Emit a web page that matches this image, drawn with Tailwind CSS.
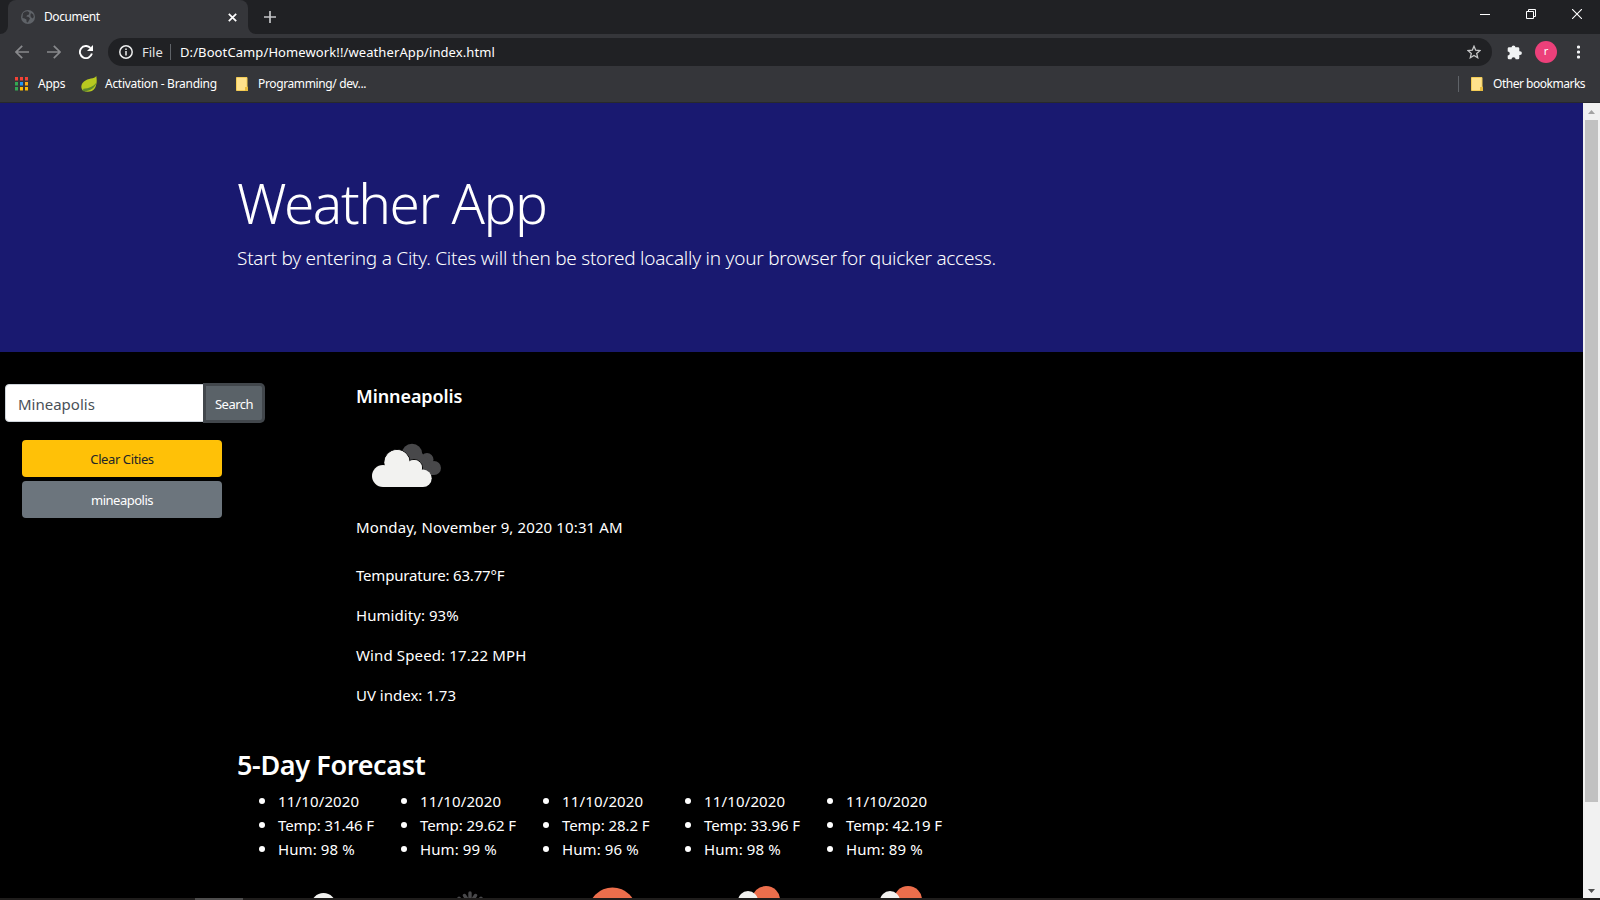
<!DOCTYPE html>
<html lang="en">
<head>
<meta charset="utf-8">
<title>Document</title>
<script src="https://cdn.jsdelivr.net/npm/@tailwindcss/browser@4"></script>
</head>
<body class="w-[1600px] h-[900px] overflow-hidden bg-black text-white font-['Noto_Sans','Open_Sans',sans-serif]">
<div class="w-[1600px] h-[900px] flex flex-col">

  <!-- Tab strip -->
  <div class="h-[34px] shrink-0 bg-[#202124] flex">
    <svg class="w-2 h-[34px] shrink-0" viewBox="0 0 8 34"><path d="M0 34a8 8 0 0 0 8-8v8z" fill="#35363a"/></svg>
    <div class="w-[240px] h-[34px] bg-[#35363a] rounded-t-lg flex items-center pl-[13px] pr-[11px]">
      <svg class="w-[14px] h-[14px] shrink-0" viewBox="0 0 14 14"><circle cx="7" cy="7" r="7" fill="#5f6368"/><path d="M2 3.2Q4 1 6.6 1.2L8.4 2.6 8 4.4 6 5.2 5.4 6.6 7.6 7l1.4 1.6L8 10.2 6.8 12.6 5.6 12 5.4 9.6 3.6 8.4 1.4 8zM10 3l2.2 1.4.6 2.6-1.2 1.4L9.8 7 9.4 5z" fill="#35363a"/></svg>
      <span class="ml-[9px] text-[12px] leading-4 tracking-[-0.42px]">Document</span>
      <svg class="ml-auto w-[9px] h-[9px]" viewBox="0 0 9 9"><path d="M.8.8l7.4 7.4M8.200.8L.8 8.200" stroke="#fff" stroke-width="1.7"/></svg>
    </div>
    <svg class="w-2 h-[34px] shrink-0" viewBox="0 0 8 34"><path d="M8 34a8 8 0 0 1-8-8v8z" fill="#35363a"/></svg>
    <svg class="ml-2 mt-[11px] w-3 h-3" viewBox="0 0 12 12"><path d="M6 0v12M0 6h12" stroke="#c4c5c7" stroke-width="1.7"/></svg>
    <div class="ml-auto flex pt-[9px] pr-[18px] gap-[36px]">
      <svg class="w-[10px] h-[10px]" viewBox="0 0 10 10"><path d="M0 5.500h10" stroke="#fff"/></svg>
      <svg class="w-[10px] h-[10px]" viewBox="0 0 10 10"><path d="M.5 2.500h7v7h-7zM2.500 2.500v-2h7v7h-2" fill="none" stroke="#fff"/></svg>
      <svg class="w-[10px] h-[10px]" viewBox="0 0 10 10"><path d="M0 0l10 10M10 0L0 10" stroke="#fff" stroke-width="1.100"/></svg>
    </div>
  </div>

  <!-- Toolbar -->
  <div class="h-9 shrink-0 bg-[#35363a] flex items-center pl-[15px] pr-[20px]">
    <svg class="shrink-0 w-[14px] h-[14px]" viewBox="0 0 14 14"><path d="M14 7H1.500M7.200.8L1 7l6.200 6.200" fill="none" stroke="#88898c" stroke-width="1.700"/></svg>
    <svg class="shrink-0 ml-[18px] w-[14px] h-[14px]" viewBox="0 0 14 14"><path d="M0 7h12.500M6.800.8L13 7l-6.200 6.200" fill="none" stroke="#88898c" stroke-width="1.700"/></svg>
    <svg class="shrink-0 ml-[18px] w-[14px] h-[14px]" viewBox="0 0 14 14"><path d="M12.900 8.600A6.100 6.100 0 1 1 11.400 2.800" fill="none" stroke="#fff" stroke-width="1.900"/><path d="M14 0v6H8z" fill="#fff"/></svg>
    <div class="shrink-0 ml-[15px] w-[1384px] h-7 bg-[#202124] rounded-full flex items-center pl-[11px] pr-[11px]">
      <svg class="w-[14px] h-[14px]" viewBox="0 0 14 14"><circle cx="7" cy="7" r="6.200" fill="none" stroke="#eceded" stroke-width="1.500"/><path d="M7 6v4.500M7 3.400v1.500" stroke="#eceded" stroke-width="1.500"/></svg>
      <span class="w-[28px] ml-[9px] text-[13px] leading-4 text-[#e3e3e4]">File</span>
      <div class="w-px h-4 bg-[#5f6368]"></div>
      <span class="ml-[9px] text-[13px] leading-4 tracking-[0.1px]">D:/BootCamp/Homework!!/weatherApp/index.html</span>
      <svg class="ml-auto w-[14px] h-[14px]" viewBox="0 0 14 14"><path d="M7 1.200l1.700 4 4.300.4-3.300 2.800 1 4.300L7 10.400l-3.700 2.300 1-4.300L1 5.600l4.300-.4z" fill="none" stroke="#c6c7c8" stroke-width="1.300"/></svg>
    </div>
    <svg class="shrink-0 ml-[15px] w-[15px] h-[15px]" viewBox="0 0 15 15"><path d="M2 2.300h2.600a1.900 1.900 0 1 1 3.800 0H11a1.300 1.300 0 0 1 1.300 1.300v2.600h.7a1.900 1.900 0 1 1 0 3.800h-.7v3a1.300 1.300 0 0 1-1.300 1.300H8.600a2.050 2.050 0 0 0-4.100 0H2A1.300 1.300 0 0 1 .7 13v-2.500a2.050 2.050 0 0 0 0-4.100V3.600A1.300 1.300 0 0 1 2 2.300z" fill="#f1f3f4"/></svg>
    <div class="shrink-0 ml-[13px] w-[22px] h-[22px] rounded-full bg-[#ec407a] text-[11px] leading-[20px] text-center">r</div>
    <svg class="shrink-0 ml-[20px] w-[3px] h-[14px]" viewBox="0 0 3 14"><circle cx="1.500" cy="2" r="1.600" fill="#f1f3f4"/><circle cx="1.500" cy="7" r="1.600" fill="#f1f3f4"/><circle cx="1.500" cy="12" r="1.600" fill="#f1f3f4"/></svg>
  </div>

  <!-- Bookmarks bar -->
  <div class="h-[33px] shrink-0 bg-[#35363a] border-b border-[#28292c] flex items-start pt-[6px] pl-[15px] pr-[15px] text-[12px] leading-4">
    <svg class="mt-[1px] w-[13px] h-[14px]" viewBox="0 0 13 14"><path d="M0 0h3v3.500H0zM5 0h3v3.500H5zM10 0h3v3.500h-3z" fill="#f44336"/><path d="M0 5h3v3.500H0z" fill="#34a853"/><path d="M5 5h3v3.500H5z" fill="#2196f3"/><path d="M10 5h3v3.500h-3z" fill="#fbab17"/><path d="M0 10h3v3.500H0z" fill="#34a853"/><path d="M5 10h3v3.500H5zM10 10h3v3.500h-3z" fill="#fbbc05"/></svg>
    <span class="w-[43px] pl-[10px] tracking-[-0.25px]">Apps</span>
    <svg class="ml-[10px] w-4 h-4" viewBox="0 0 16 16"><path d="M15.300 0C13.500 3 7 2 3 5.500-.5 8.500-.3 12.500 2 14.500c4 2.500 9.500 1.500 12-2.500C16 8.500 16 4 15.300 0z" fill="#b8c920"/><path d="M1.500 15C8 16 14 12.500 15.500 6.500 12.500 10.500 8 12.600 2.500 12.800z" fill="#5f8a2c"/></svg>
    <span class="w-[131px] pl-2 tracking-[-0.29px] whitespace-nowrap">Activation - Branding</span>
    <svg class="ml-2 mt-[1px] w-3 h-[14px]" viewBox="0 0 12 14"><path d="M.5.5h10.500v9.500h.5v3.500H.5z" fill="#ffe28c" stroke="#f3cc56"/><path d="M9 10h3v4H9z" fill="#e9bd3e"/></svg>
    <span class="ml-[10px] tracking-[-0.37px]">Programming/ dev...</span>
    <div class="ml-auto w-px h-4 bg-[#5f6368]"></div>
    <svg class="ml-3 mt-[1px] w-3 h-[14px]" viewBox="0 0 12 14"><path d="M.5.5h10.500v9.500h.5v3.500H.5z" fill="#ffe28c" stroke="#f3cc56"/><path d="M9 10h3v4H9z" fill="#e9bd3e"/></svg>
    <span class="w-[92px] ml-[10px] tracking-[-0.48px] whitespace-nowrap">Other bookmarks</span>
  </div>

  <!-- Page and scrollbar -->
  <div class="h-[795px] shrink-0 flex">
    <main class="w-[1583px] h-[795px] overflow-hidden bg-black">
      <header class="h-[249px] bg-[#191970] pl-[237px] pt-[66px] font-light">
        <h1 class="text-[55px] leading-[68px] tracking-[-1.45px]">Weather App</h1>
        <p class="mt-[6px] text-[19px] leading-[30px] tracking-[-0.245px]">Start by entering a City. Cites will then be stored loacally in your browser for quicker access.</p>
      </header>

      <div class="flex h-[390px]">
        <aside class="w-[356px] pt-[32px] pl-[5px]">
          <div class="flex h-[38px]">
            <div class="w-[201px] h-[38px] bg-white border border-[#ced4da] rounded-l-[4px] pl-3 leading-[38px] text-[15px] text-[#495057]">Mineapolis</div>
            <div class="w-[56px] h-[34px] mt-[2px] bg-[#5a6268] rounded-r-[2px] ring-[3px] ring-[#42474c] text-center text-[13px] leading-[36px] tracking-[-0.5px]">Search</div>
          </div>
          <div class="ml-[17px] mt-[18px] w-[200px] flex flex-col gap-1 text-center text-[13px] leading-[39px]">
            <div class="h-[37px] rounded-[4px] bg-[#ffc107] text-[#212529] tracking-[-0.4px]">Clear Cities</div>
            <div class="h-[37px] rounded-[4px] bg-[#6c757d] tracking-[-0.5px]">mineapolis</div>
          </div>
        </aside>
        <section class="text-[15px] leading-6">
          <h5 class="pt-[32px] text-[18px] leading-6 font-semibold tracking-[-0.08px]">Minneapolis</h5>
          <svg class="mt-[7px] w-[100px] h-[100px]" viewBox="0 0 100 100"><g fill="#48484a"><circle cx="56" cy="39" r="10.300"/><circle cx="71" cy="44.500" r="6.500"/><circle cx="78" cy="53" r="7"/><path d="M50 36h14l8 9 6 15H60z"/></g><g fill="#f2f2f0" stroke="#000" stroke-width="1"><circle cx="41" cy="47.500" r="13"/><circle cx="58" cy="53" r="8.500"/></g><g fill="#f2f2f0"><circle cx="41" cy="47.500" r="12.500"/><circle cx="58" cy="53" r="8"/><circle cx="27" cy="61" r="11"/><circle cx="67" cy="63.300" r="8.700"/><path d="M27 72h40V56L52 47 30 50z"/></g></svg>
          <p class="tracking-[0.12px]">Monday, November 9, 2020 10:31 AM</p>
          <div class="mt-6 flex flex-col gap-4">
            <p class="tracking-[-0.19px]">Tempurature: 63.77°F</p>
            <p class="tracking-[0.06px]">Humidity: 93%</p>
            <p class="tracking-[0.13px]">Wind Speed: 17.22 MPH</p>
            <p>UV index: 1.73</p>
          </div>
        </section>
      </div>

      <section class="pl-[237px]">
        <h2 class="pt-[6px] text-[27px] leading-[34px] font-semibold tracking-[-0.35px]">5-Day Forecast</h2>
        <div class="mt-[6px] flex text-[15px] leading-6">
          <div class="w-[142px]"><ul class="pl-[41px] list-disc marker:text-[18px]"><li class="h-6 tracking-[0.15px]">11/10/2020</li><li class="h-6 tracking-[-0.08px]">Temp: 31.46 F</li><li class="h-6 tracking-[0.1px]">Hum: 98 %</li></ul>
            <svg class="mt-[11px] ml-[37px] w-[100px] h-[100px]" viewBox="0 0 100 100"><circle cx="49.500" cy="34.500" r="12.500" fill="#f2f2f0"/><path d="M24 47h55v25H24z" fill="#f2f2f0"/></svg></div>
          <div class="w-[142px]"><ul class="pl-[41px] list-disc marker:text-[18px]"><li class="h-6 tracking-[0.15px]">11/10/2020</li><li class="h-6 tracking-[-0.08px]">Temp: 29.62 F</li><li class="h-6 tracking-[0.1px]">Hum: 99 %</li></ul>
            <svg class="mt-[11px] ml-[37px] w-[100px] h-[100px]" viewBox="0 0 100 100"><path d="M54 22v34M48.500 24.500l2 3M59.500 24.500l-2 3M43 27.200l22 24M65 27.200l-22 24" stroke="#48484a" stroke-width="3.400" stroke-linecap="round"/></svg></div>
          <div class="w-[142px]"><ul class="pl-[41px] list-disc marker:text-[18px]"><li class="h-6 tracking-[0.15px]">11/10/2020</li><li class="h-6 tracking-[-0.08px]">Temp: 28.2 F</li><li class="h-6 tracking-[0.1px]">Hum: 96 %</li></ul>
            <svg class="mt-[11px] ml-[37px] w-[100px] h-[100px]" viewBox="0 0 100 100"><circle cx="54.500" cy="40.500" r="24" fill="#ec6e4c"/></svg></div>
          <div class="w-[142px]"><ul class="pl-[41px] list-disc marker:text-[18px]"><li class="h-6 tracking-[0.15px]">11/10/2020</li><li class="h-6 tracking-[-0.08px]">Temp: 33.96 F</li><li class="h-6 tracking-[0.1px]">Hum: 98 %</li></ul>
            <svg class="mt-[11px] ml-[37px] w-[100px] h-[100px]" viewBox="0 0 100 100"><circle cx="66" cy="29" r="14" fill="#ec6e4c"/><circle cx="48" cy="30" r="10" fill="#f2f2f0"/></svg></div>
          <div class="w-[142px]"><ul class="pl-[41px] list-disc marker:text-[18px]"><li class="h-6 tracking-[0.15px]">11/10/2020</li><li class="h-6 tracking-[-0.08px]">Temp: 42.19 F</li><li class="h-6 tracking-[0.1px]">Hum: 89 %</li></ul>
            <svg class="mt-[11px] ml-[37px] w-[100px] h-[100px]" viewBox="0 0 100 100"><circle cx="66" cy="29" r="14" fill="#ec6e4c"/><circle cx="48" cy="30" r="10" fill="#f2f2f0"/></svg></div>
        </div>
      </section>
    </main>
    <div class="w-[17px] h-[795px] bg-[#f1f1f1] flex flex-col items-center">
      <svg class="w-[17px] h-[17px] shrink-0" viewBox="0 0 17 17"><path d="M5 11l3.500-4 3.500 4z" fill="#a3a3a3"/></svg>
      <div class="w-[13px] h-[682px] bg-[#c1c1c1]"></div>
      <svg class="mt-auto w-[17px] h-[17px] shrink-0" viewBox="0 0 17 17"><path d="M5 8l3.500 4L12 8z" fill="#505050"/></svg>
    </div>
  </div>
  <div class="h-[2px] shrink-0 bg-[#1f1d1c] pl-[195px]"><div class="w-12 h-[2px] bg-[#4e4d4d]"></div></div>
</div>
</body>
</html>
